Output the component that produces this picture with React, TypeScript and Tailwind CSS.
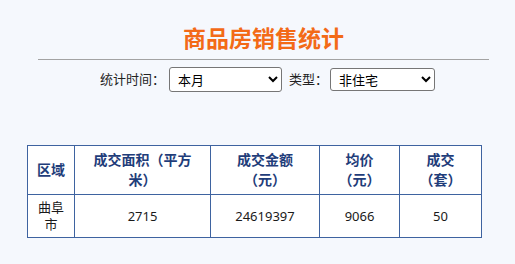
import React, { useState } from 'react';

const font = { fontFamily: '"Noto Sans", "Noto Sans CJK SC", sans-serif' };

export default function App() {
  const [period, setPeriod] = useState('本月');
  const [kind, setKind] = useState('非住宅');

  return (
    <div className="min-h-screen bg-[#f5f8fd] pt-[27px] font-['Noto_Sans','Noto_Sans_CJK_SC',sans-serif]" style={font}>
      <div className="ml-[38px] w-[451px]">
        <h1 className="text-center text-[23px] leading-[23px] font-bold text-[#f36a17]">商品房销售统计</h1>
        <div className="mt-[9px] border-t border-[#a3a3a3]" />
        <div className="mt-[7px] flex items-center justify-center pl-[8px] text-[13px] text-[#222]">
          <span>统计时间：</span>
          <select
            value={period}
            onChange={(e) => setPeriod(e.target.value)}
            className="ml-[4px] h-[25px] w-[113px] rounded-[3px] border border-[#767676] bg-white pl-[4px] text-[13px] text-black"
          >
            <option>本月</option>
            <option>本季度</option>
            <option>本年</option>
          </select>
          <span className="ml-[7px]">类型：</span>
          <select
            value={kind}
            onChange={(e) => setKind(e.target.value)}
            className="ml-[2px] h-[23px] w-[105px] rounded-[3px] border border-[#767676] bg-white pl-[4px] text-[13px] text-black"
          >
            <option>住宅</option>
            <option>非住宅</option>
          </select>
        </div>
      </div>

      <table className="mt-[53px] ml-[27px] w-[454px] table-fixed border-collapse border border-[#3e63a0] bg-white">
        <colgroup>
          <col className="w-[47px]" />
          <col className="w-[136px]" />
          <col className="w-[109px]" />
          <col className="w-[80px]" />
          <col className="w-[82px]" />
        </colgroup>
        <thead>
          <tr className="h-[49px] text-[14px] leading-[20px] font-bold text-[#1f3d7a]">
            <th className="border border-[#3e63a0] px-[6px]">区域</th>
            <th className="border border-[#3e63a0] px-[6px]">成交面积（平方<br />米）</th>
            <th className="border border-[#3e63a0] px-[6px]">成交金额<br />（元）</th>
            <th className="border border-[#3e63a0] px-[6px]">均价<br />（元）</th>
            <th className="border border-[#3e63a0] px-[6px]">成交<br />（套）</th>
          </tr>
        </thead>
        <tbody>
          <tr className="h-[43px] text-center text-[13px] leading-[17px] text-[#1a1a1a]">
            <td className="border border-[#3e63a0] px-[6px]">曲阜市</td>
            <td className="border border-[#3e63a0] px-[6px]">2715</td>
            <td className="border border-[#3e63a0] px-[6px]">24619397</td>
            <td className="border border-[#3e63a0] px-[6px]">9066</td>
            <td className="border border-[#3e63a0] px-[6px]">50</td>
          </tr>
        </tbody>
      </table>
    </div>
  );
}
